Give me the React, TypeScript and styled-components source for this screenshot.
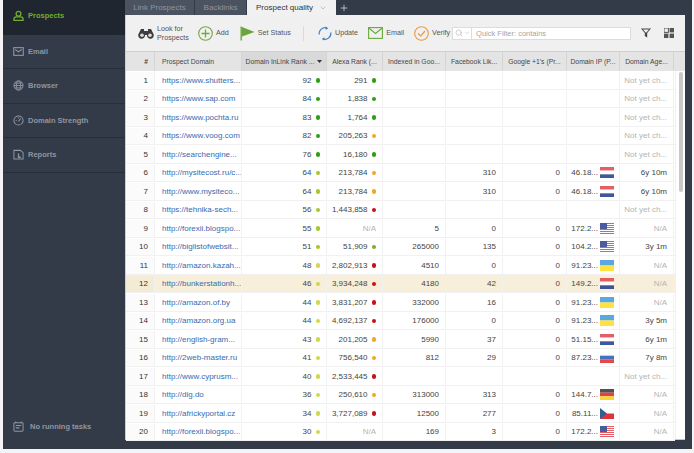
import * as React from 'react';
import styled, { createGlobalStyle } from 'styled-components';
import { Plus, ChevronDown, Search } from 'lucide-react';

const GlobalStyle = createGlobalStyle`
    html, body { margin: 0; padding: 0; background: #f4f4f4; }
    body { font-family: "Liberation Sans", Arial, sans-serif; }
`;

const Columns = '29px 87px 85px 56px 63px 57px 64px 53px 54px';

const Page = styled.div`
    width: 694px;
    height: 453px;
    overflow: hidden;
    padding: 0 2px 4px 3px;
    box-sizing: border-box;
`;

const Win = styled.div`
    height: 100%;
    background: #333a48;
    display: flex;
`;

const Sidebar = styled.div`
    width: 122px;
    display: flex;
    flex-direction: column;
`;

const NavItem = styled.div<{ $active?: boolean }>`
    height: 34.5px;
    box-sizing: border-box;
    padding: ${p => p.$active ? '0 0 2px 10px' : '0 0 0 10px'};
    display: flex;
    align-items: center;
    gap: 4px;
    font-size: 7.5px;
    font-weight: bold;
    color: ${p => p.$active ? '#6fae2c' : '#8f96a3'};
    background: ${p => p.$active ? '#20262f' : 'transparent'};
    border-bottom: 1px solid ${p => p.$active ? '#20262f' : '#282e3a'};
`;

const NavIcon = styled.svg`
    width: 11px;
    height: 11px;
    flex: none;
`;

const Tasks = styled.div`
    margin-top: auto;
    height: 28px;
    display: flex;
    align-items: flex-start;
    padding-left: 10px;
    gap: 6px;
    font-size: 7.5px;
    line-height: 11px;
    font-weight: bold;
    color: #8f96a3;
`;

const Main = styled.div`
    width: 560px;
    display: flex;
    flex-direction: column;
    height: 440px;
`;

const Tabs = styled.div`
    height: 15px;
    display: flex;
    align-items: stretch;
    font-size: 8px;
`;

const Tab = styled.div<{ $active?: boolean; $w: number }>`
    width: ${p => p.$w}px;
    box-sizing: border-box;
    margin-right: 1px;
    display: flex;
    align-items: center;
    justify-content: center;
    gap: 6px;
    color: ${p => p.$active ? '#333' : '#8d939e'};
    background: ${p => p.$active ? '#f1f1f1' : '#4b5361'};
`;

const AddTab = styled.div`
    width: 14px;
    display: flex;
    align-items: center;
    justify-content: center;
    color: #c9ccd2;
`;

const Panel = styled.div`
    flex: 1;
    min-height: 0;
    background: #fff;
    display: flex;
    flex-direction: column;
    border-left: 1px solid #cfcfcf;
    border-bottom: 1px solid #c8c8c8;
`;

const Toolbar = styled.div`
    height: 37px;
    box-sizing: border-box;
    flex: none;
    background: #f0f0f0;
    border-bottom: 1px solid #cfcfcf;
    display: flex;
    align-items: center;
    font-size: 7.2px;
    color: #555;
`;

const ToolBtn = styled.div<{ $ml: number }>`
    margin-left: ${p => p.$ml}px;
    display: flex;
    align-items: center;
    gap: 3px;
    line-height: 9.5px;
    white-space: nowrap;
`;

const ToolSep = styled.div`
    width: 1px;
    height: 15px;
    background: #dadada;
    margin-left: 12px;
`;

const FilterBox = styled.div`
    width: 179px;
    height: 13px;
    box-sizing: border-box;
    margin-left: 2px;
    display: flex;
    align-items: center;
    background: #fff;
    border: 1px solid #dcdcdc;
    color: #a5a5a5;
    font-size: 7.5px;
`;

const FilterDrop = styled.div`
    width: 19px;
    height: 100%;
    flex: none;
    display: flex;
    align-items: center;
    padding-left: 2px;
    box-sizing: border-box;
    gap: 1px;
    border-right: 1px solid #dcdcdc;
    margin-right: 4px;
    color: #b5b5b5;
`;

const TableHead = styled.div`
    height: 19px;
    flex: none;
    display: grid;
    grid-template-columns: ${Columns} 1fr;
    background: #e4e4e4;
    font-size: 6.8px;
    color: #444;
`;

const HeadCell = styled.div<{ $sorted?: boolean; $first?: boolean; $left?: boolean }>`
    display: flex;
    align-items: center;
    justify-content: ${p => p.$first ? 'flex-end' : p.$left ? 'flex-start' : 'center'};
    padding-left: ${p => p.$left ? '7px' : '0'};
    padding-right: ${p => p.$first ? '6px' : '0'};
    gap: 3px;
    white-space: nowrap;
    overflow: hidden;
    font-weight: ${p => p.$first ? 'bold' : 'normal'};
    background: ${p => p.$sorted ? '#d9d9d9' : 'transparent'};
    border-right: 1px solid #d4d4d4;
`;

const Body = styled.div`
    flex: 1;
    min-height: 0;
    display: flex;
`;

const Rows = styled.div`
    width: 549px;
    flex: none;
`;

const Row = styled.div<{ $hl?: boolean }>`
    height: 18.5px;
    box-sizing: border-box;
    display: grid;
    grid-template-columns: ${Columns};
    padding-top: 1px;
    border-bottom: 1px solid #f1f1f1;
    background: ${p => p.$hl ? '#f7efd9' : '#fff'};
    font-size: 8px;
    color: #444;
`;

const Cell = styled.div<{ $muted?: boolean }>`
    display: flex;
    align-items: center;
    justify-content: flex-end;
    padding-right: 6px;
    gap: 4px;
    white-space: nowrap;
    overflow: hidden;
    border-right: 1px solid #f1f1f1;
    color: ${p => p.$muted ? '#b4b4b4' : 'inherit'};
`;

const NumCell = styled(Cell)`
    color: #333;
    background: rgba(0, 0, 0, 0.015);
`;

const LinkCell = styled(Cell)`
    justify-content: flex-start;
    padding: 0 0 0 7px;
    color: #3a6aae;
`;

const RankCell = styled(Cell)`
    padding-right: 6px;
`;

const IpCell = styled(Cell)`
    padding-right: 5px;
    gap: 2px;
`;

const Dot = styled.span<{ $c: string }>`
    width: 4.5px;
    height: 4.5px;
    border-radius: 50%;
    flex: none;
    background: ${p => p.$c};
`;

const FlagSvg = styled.svg`
    width: 14px;
    height: 11px;
    flex: none;
    opacity: 0.85;
`;

const ScrollTrack = styled.div`
    flex: 1;
    padding: 1px 2px 0 3px;
    background: #fff;
    border-left: 1px solid #f1f1f1;
`;

const ScrollThumb = styled.div`
    height: 120px;
    background: #c9c9c9;
    border-radius: 2px;
`;

const G = '#2f9e16';
const L = '#a6c927';
const Y = '#cfd84a';
const O = '#f0a823';
const R = '#c5121a';

type FlagCode = 'NL' | 'US' | 'UA' | 'RU' | 'DE' | 'CZ';

const Flag: React.FC<{ code: FlagCode }> = ({ code }) => {
    const stripes: Record<string, string[]> = {
        NL: ['#e0434b', '#fff', '#1f3a8a'],
        UA: ['#3f9ad6', '#ffdc1e'],
        RU: ['#fff', '#2a57b5', '#df2a2a'],
        DE: ['#333', '#d9231f', '#fbce0c'],
    };
    if (code === 'US') {
        return (
            <FlagSvg viewBox="0 0 14 11">
                {[0, 1, 2, 3, 4, 5].map(i => (
                    <rect key={i} x="0" y={i * 2} width="14" height="1" fill="#e0434b" />
                ))}
                {[0, 1, 2, 3, 4].map(i => (
                    <rect key={i} x="0" y={i * 2 + 1} width="14" height="1" fill="#fff" />
                ))}
                <rect width="7" height="6" fill="#2c3f8f" />
            </FlagSvg>
        );
    }
    if (code === 'CZ') {
        return (
            <FlagSvg viewBox="0 0 14 11">
                <rect width="14" height="5.5" fill="#fff" />
                <rect y="5.5" width="14" height="5.5" fill="#d7141a" />
                <path d="M0 0 L7 5.5 L0 11 Z" fill="#11457e" />
            </FlagSvg>
        );
    }
    const s = stripes[code];
    return (
        <FlagSvg viewBox="0 0 14 11">
            {s.map((c, i) => (
                <rect key={c} y={i * 11 / s.length} width="14" height={11 / s.length} fill={c} />
            ))}
        </FlagSvg>
    );
};

interface RowData {
    url: string;
    rank: [string, string];
    alexa: [string, string | null];
    indexed?: string;
    fb?: string;
    plus?: string;
    ip?: string;
    flag?: FlagCode;
    age: string;
}

const NotYet = 'Not yet ch...';

const data: RowData[] = [
    { url: 'https://www.shutters...', rank: ['92', G], alexa: ['291', G], age: NotYet },
    { url: 'https://www.sap.com', rank: ['84', G], alexa: ['1,838', G], age: NotYet },
    { url: 'https://www.pochta.ru', rank: ['83', G], alexa: ['1,764', G], age: NotYet },
    { url: 'https://www.voog.com', rank: ['82', G], alexa: ['205,263', O], age: NotYet },
    { url: 'http://searchengine...', rank: ['76', G], alexa: ['16,180', G], age: NotYet },
    { url: 'http://mysitecost.ru/c...', rank: ['64', L], alexa: ['213,784', O], fb: '310', plus: '0', ip: '46.18...', flag: 'NL', age: '6y 10m' },
    { url: 'http://www.mysiteco...', rank: ['64', L], alexa: ['213,784', O], fb: '310', plus: '0', ip: '46.18...', flag: 'NL', age: '6y 10m' },
    { url: 'https://tehnika-sech...', rank: ['56', L], alexa: ['1,443,858', R], age: NotYet },
    { url: 'http://forexii.blogspo...', rank: ['55', L], alexa: ['N/A', null], indexed: '5', fb: '0', plus: '0', ip: '172.2...', flag: 'US', age: 'N/A' },
    { url: 'http://biglistofwebsit...', rank: ['51', L], alexa: ['51,909', '#7fae1f'], indexed: '265000', fb: '135', plus: '0', ip: '104.2...', flag: 'US', age: '3y 1m' },
    { url: 'http://amazon.kazah...', rank: ['48', Y], alexa: ['2,802,913', R], indexed: '4510', fb: '0', plus: '0', ip: '91.23...', flag: 'UA', age: 'N/A' },
    { url: 'http://bunkerstationh...', rank: ['46', Y], alexa: ['3,934,248', R], indexed: '4180', fb: '42', plus: '0', ip: '149.2...', flag: 'NL', age: 'N/A' },
    { url: 'http://amazon.of.by', rank: ['44', Y], alexa: ['3,831,207', R], indexed: '332000', fb: '16', plus: '0', ip: '91.23...', flag: 'UA', age: 'N/A' },
    { url: 'http://amazon.org.ua', rank: ['44', Y], alexa: ['4,692,137', R], indexed: '176000', fb: '0', plus: '0', ip: '91.23...', flag: 'UA', age: '3y 5m' },
    { url: 'http://english-gram...', rank: ['43', Y], alexa: ['201,205', O], indexed: '5990', fb: '37', plus: '0', ip: '51.15...', flag: 'NL', age: '6y 1m' },
    { url: 'http://2web-master.ru', rank: ['41', Y], alexa: ['756,540', O], indexed: '812', fb: '29', plus: '0', ip: '87.23...', flag: 'RU', age: '7y 8m' },
    { url: 'http://www.cyprusm...', rank: ['40', Y], alexa: ['2,533,445', R], age: NotYet },
    { url: 'http://dig.do', rank: ['36', Y], alexa: ['250,610', O], indexed: '313000', fb: '313', plus: '0', ip: '144.7...', flag: 'DE', age: 'N/A' },
    { url: 'http://africkyportal.cz', rank: ['34', Y], alexa: ['3,727,089', R], indexed: '12500', fb: '277', plus: '0', ip: '85.11...', flag: 'CZ', age: 'N/A' },
    { url: 'http://forexii.blogspo...', rank: ['30', Y], alexa: ['N/A', null], indexed: '169', fb: '3', plus: '0', ip: '172.2...', flag: 'US', age: 'N/A' },
];

const headers = ['Domain InLink Rank ...', 'Alexa Rank (...', 'Indexed in Goo...', 'Facebook Lik...', "Google +1's (Pr...", 'Domain IP (P...', 'Domain Age...'];

const App: React.FC = () => {
    return (
        <Page>
            <GlobalStyle />
            <Win>
                <Sidebar>
                    <NavItem $active>
                        <NavIcon viewBox="0 0 12 12" fill="none" stroke="#6fae2c" strokeWidth="1.4">
                            <circle cx="6" cy="4" r="2.6" />
                            <path d="M1 11.3 V10 Q1 7.8 3.6 7.6 H8.4 Q11 7.8 11 10 V11.3 Z" />
                        </NavIcon>
                        Prospects
                    </NavItem>
                    <NavItem>
                        <NavIcon viewBox="0 0 12 12" fill="none" stroke="#8f96a3" strokeWidth="1.2">
                            <rect x="0.8" y="1.8" width="10.4" height="8.4" />
                            <path d="M2.5 3.8 L6 6.4 L9.5 3.8" />
                        </NavIcon>
                        Email
                    </NavItem>
                    <NavItem>
                        <NavIcon viewBox="0 0 12 12" fill="none" stroke="#8f96a3" strokeWidth="1">
                            <circle cx="6" cy="6" r="5" />
                            <ellipse cx="6" cy="6" rx="2.3" ry="5" />
                            <path d="M1 6 H11 M1.8 3.4 H10.2 M1.8 8.6 H10.2" />
                        </NavIcon>
                        Browser
                    </NavItem>
                    <NavItem>
                        <NavIcon viewBox="0 0 12 12" fill="none" stroke="#8f96a3" strokeWidth="1.1">
                            <circle cx="6" cy="6" r="5" />
                            <path d="M6 7 L8.4 3.8 M3 6 H4 M6 2.8 V3.8" />
                        </NavIcon>
                        Domain Strength
                    </NavItem>
                    <NavItem>
                        <NavIcon viewBox="0 0 12 12" fill="none" stroke="#8f96a3" strokeWidth="1.1">
                            <path d="M1 1.5 H8 L11 4 V11 H1 Z" />
                            <path d="M6 5 V9 H8.5" strokeWidth="1.4" />
                        </NavIcon>
                        Reports
                    </NavItem>
                    <Tasks>
                        <NavIcon viewBox="0 0 12 12" fill="none" stroke="#8f96a3" strokeWidth="1.1">
                            <rect x="1" y="1.8" width="10" height="9.4" rx="1" />
                            <path d="M3 0.5 V2.5 M9 0.5 V2.5 M3 5 H9 M3 7.5 H7" />
                        </NavIcon>
                        No running tasks
                    </Tasks>
                </Sidebar>
                <Main>
                    <Tabs>
                        <Tab $w={69}>Link Prospects</Tab>
                        <Tab $w={51}>Backlinks</Tab>
                        <Tab $w={89} $active>
                            Prospect quality
                            <ChevronDown size={8} color="#aaa" />
                        </Tab>
                        <AddTab><Plus size={10} strokeWidth={2} /></AddTab>
                    </Tabs>
                    <Panel>
                        <Toolbar>
                            <ToolBtn $ml={12}>
                                <svg width="16" height="12" viewBox="0 0 16 12">
                                    <path d="M3 2 H6 V4 H10 V2 H13 L15.5 7 A3.4 3.4 0 1 1 9 8 H7 A3.4 3.4 0 1 1 0.5 7 Z" fill="#3d3d3d" />
                                    <circle cx="4" cy="8.2" r="1.8" fill="#ddd" />
                                    <circle cx="12" cy="8.2" r="1.8" fill="#ddd" />
                                </svg>
                                <span>Look for<br />Prospects</span>
                            </ToolBtn>
                            <ToolBtn $ml={9}>
                                <svg width="15" height="15" viewBox="0 0 15 15" fill="none" stroke="#72a93a" strokeWidth="1.1">
                                    <circle cx="7.5" cy="7.5" r="6.8" />
                                    <path d="M7.5 3.5 V11.5 M3.5 7.5 H11.5" strokeWidth="1.3" />
                                </svg>
                                Add
                            </ToolBtn>
                            <ToolBtn $ml={11}>
                                <svg width="15" height="15" viewBox="0 0 15 15">
                                    <rect x="0.5" y="0.5" width="1.4" height="14" fill="#6ba53a" />
                                    <path d="M2 1 L14.5 6 L2 10.5 Z" fill="#6ba53a" />
                                </svg>
                                Set Status
                            </ToolBtn>
                            <ToolSep />
                            <ToolBtn $ml={14}>
                                <svg width="14" height="15" viewBox="0 0 14 15" fill="none" stroke="#3f7ec4" strokeWidth="1.2">
                                    <path d="M1.2 8.5 A6 6 0 0 1 9 2" />
                                    <path d="M12.8 6.5 A6 6 0 0 1 5 13" />
                                    <path d="M7.6 0.6 L10.2 2.3 L7.6 4 Z" fill="#3f7ec4" stroke="none" />
                                    <path d="M6.4 11.2 L3.8 12.9 L6.4 14.6 Z" fill="#3f7ec4" stroke="none" />
                                </svg>
                                Update
                            </ToolBtn>
                            <ToolBtn $ml={10}>
                                <svg width="15" height="12" viewBox="0 0 15 12" fill="none" stroke="#69a93b" strokeWidth="1.1">
                                    <rect x="0.6" y="0.6" width="13.8" height="10.8" />
                                    <path d="M0.8 1 L7.5 6.5 L14.2 1" />
                                </svg>
                                Email
                            </ToolBtn>
                            <ToolBtn $ml={10}>
                                <svg width="15" height="15" viewBox="0 0 15 15" fill="none" stroke="#ee9a3c" strokeWidth="1.1">
                                    <circle cx="7.5" cy="7.5" r="6.8" />
                                    <path d="M4 7.5 L6.8 10 L11 5" strokeWidth="1.2" />
                                </svg>
                                Verify
                            </ToolBtn>
                            <FilterBox>
                                <FilterDrop>
                                    <Search size={8} />
                                    <ChevronDown size={6} />
                                </FilterDrop>
                                Quick Filter: contains
                            </FilterBox>
                            <ToolBtn $ml={10}>
                                <svg width="10" height="10" viewBox="0 0 10 10">
                                    <path d="M0 0.5 H10 L6.2 5 V9.5 L3.8 8 V5 Z M2 1.6 L4.6 4.6 H5.4 L8 1.6 Z" fill="#444" fillRule="evenodd" />
                                </svg>
                            </ToolBtn>
                            <ToolBtn $ml={13}>
                                <svg width="10" height="10" viewBox="0 0 10 10" fill="#555">
                                    <rect x="0" y="0" width="4.4" height="4.4" fill="none" stroke="#555" />
                                    <rect x="5.6" y="0" width="4.4" height="4.4" />
                                    <rect x="0" y="5.6" width="4.4" height="4.4" />
                                    <rect x="5.6" y="5.6" width="4.4" height="4.4" />
                                </svg>
                            </ToolBtn>
                        </Toolbar>
                        <TableHead>
                            <HeadCell $first>#</HeadCell>
                            <HeadCell $left>Prospect Domain</HeadCell>
                            {headers.map((h, i) => (
                                <HeadCell key={h} $sorted={i === 0}>
                                    {h}
                                    {i === 0 && <svg width="5" height="3" viewBox="0 0 5 3"><path d="M0 0 H5 L2.5 3 Z" fill="#333" /></svg>}
                                </HeadCell>
                            ))}
                            <div />
                        </TableHead>
                        <Body>
                            <Rows>
                                {data.map((r, i) => (
                                    <Row key={i} $hl={i === 11}>
                                        <NumCell>{i + 1}</NumCell>
                                        <LinkCell>{r.url}</LinkCell>
                                        <RankCell>{r.rank[0]}<Dot $c={r.rank[1]} /></RankCell>
                                        {r.alexa[1]
                                            ? <RankCell>{r.alexa[0]}<Dot $c={r.alexa[1]} /></RankCell>
                                            : <Cell $muted>{r.alexa[0]}</Cell>}
                                        <Cell>{r.indexed}</Cell>
                                        <Cell>{r.fb}</Cell>
                                        <Cell>{r.plus}</Cell>
                                        <IpCell>{r.ip}{r.flag && <Flag code={r.flag} />}</IpCell>
                                        <Cell $muted={r.age === 'N/A' || r.age === NotYet}>{r.age}</Cell>
                                    </Row>
                                ))}
                            </Rows>
                            <ScrollTrack>
                                <ScrollThumb />
                            </ScrollTrack>
                        </Body>
                    </Panel>
                </Main>
            </Win>
        </Page>
    );
};

export default App;
